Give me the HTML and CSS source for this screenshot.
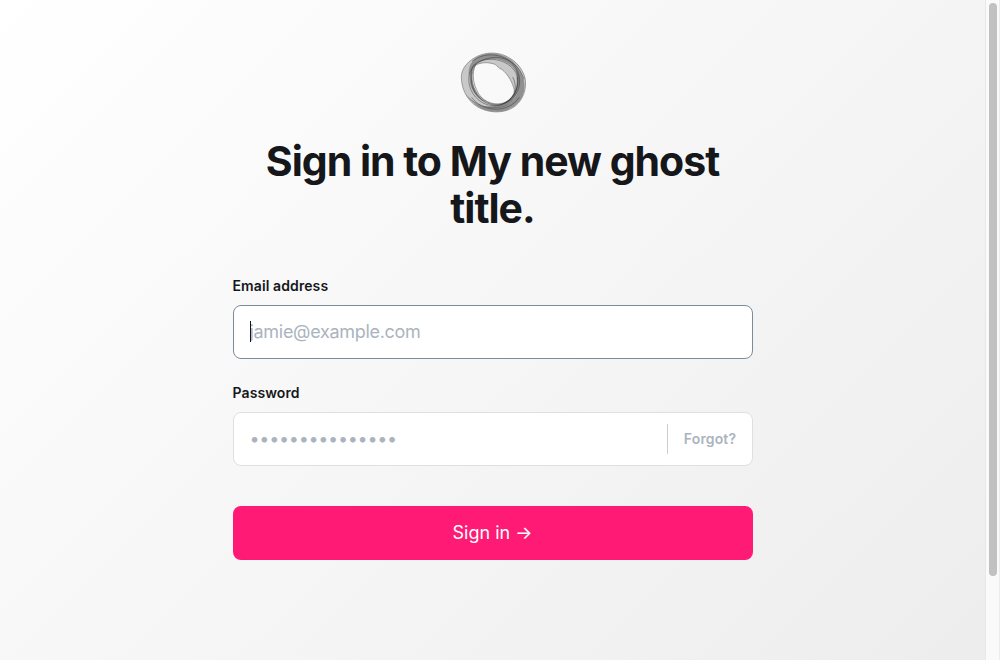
FILE: index.html
```html
<!DOCTYPE html>
<html lang="en">
<head>
<meta charset="utf-8">
<title>Sign in</title>
<link rel="stylesheet" href="styles.css">
</head>
<body>
<div class="page">
  <main class="flow">
    <form class="signin">
      <header class="header">
        <svg class="logo" viewBox="0 0 270 240" aria-hidden="true">
          <path class="band-light" fill-rule="evenodd" d="M34 104C35 77 56 55 84 42C108 31 140 30 165 41C196 54 218 80 225 108C231 139 220 172 196 192C170 212 130 215 96 201C60 187 34 150 34 104ZM76 70C61 91 63 130 84 158C106 184 135 194 163 184C188 170 197 153 191 137C183 111 171 96 157 83C145 80 143 71 135 67C115 60 93 60 76 70Z"/>
          <path class="band-mid" fill-rule="evenodd" d="M69 56C99 26 156 28 190 60C227 99 236 147 203 183C174 211 132 216 92 199C74 188 58 173 49 157C75 190 131 211 178 185C210 158 216 116 195 84C169 46 116 43 82 63C66 73 59 90 57 105C54 86 57 70 69 56Z"/>
          <path class="band-dark" d="M197 82C217 111 209 153 183 181C161 201 128 204 97 191C127 197 160 190 180 169C200 149 207 119 197 82ZM73 65C60 88 63 127 78 149C88 166 101 178 114 185C87 174 66 151 61 126C56 99 61 78 73 65Z"/>
          <g class="strands">
            <path d="M66 58C98 32 146 33 179 57C210 82 216 120 202 149C186 181 148 198 111 188C74 175 52 139 57 102C62 69 98 46 139 46C181 48 211 76 222 112"/>
            <path d="M73 68C111 38 174 52 197 91C216 132 192 176 149 189C111 193 75 167 66 130C61 104 64 82 73 68Z"/>
            <path d="M78 65C62 95 70 137 93 165C116 188 152 193 178 174C198 157 205 132 201 105"/>
            <path d="M65 166C82 188 103 199 128 201C161 205 190 191 208 166"/>
            <path d="M188 105C197 121 197 138 194 152"/>
          </g>
        </svg>
        <h1 class="title">Sign in to My new ghost title.</h1>
      </header>
      <div class="group email">
        <label for="email">Email address</label>
        <div class="field focused"><span class="caret"></span><input id="email" type="text" placeholder="jamie@example.com"></div>
      </div>
      <div class="group password">
        <label for="password">Password</label>
        <div class="field">
          <input id="password" type="password" placeholder="•••••••••••••••">
          <button class="forgot" type="button">Forgot?</button>
        </div>
      </div>
      <button class="submit" type="button">Sign in →</button>
    </form>
  </main>
  <div class="scrollbar"><div class="thumb"></div></div>
</div>
</body>
</html>
```
FILE: styles.css
```css
* { box-sizing: border-box; }
body { margin: 0; font-family: Inter, sans-serif; color: #15171a; overflow: hidden; }
.page { display: flex; height: 660px; }
.flow { flex: 1; display: flex; justify-content: center; align-items: flex-start; background: linear-gradient(135deg, #fff 0%, #ededed 100%); }
.signin { width: 520px; padding-top: 42px; display: flex; flex-direction: column; }
.header { display: flex; flex-direction: column; align-items: center; height: 235px; }
.logo { width: 90px; height: 80px; margin-left: 5px; }
.band-light { fill: #c8c8c8; stroke: #777; stroke-width: 2; }
.band-mid { fill: #777; fill-opacity: .7; }
.band-dark { fill: #444; fill-opacity: .5; }
.strands { fill: none; stroke: #333; stroke-width: 2; stroke-opacity: .7; }
.title { margin: 16px 0 0; font-size: 41px; line-height: 47px; font-weight: 700; letter-spacing: -1px; text-align: center; }
.group { display: flex; flex-direction: column; height: 107px; }
.group label { font-size: 14px; line-height: 18px; font-weight: 600; letter-spacing: 0.1px; margin-bottom: 10px; }
.field { position: relative; display: flex; align-items: center; height: 54px; border: 1px solid #dddfe1; border-radius: 8px; background: #fff; }
.focused { border-color: #7c8b9a; }
.caret { position: absolute; left: 16px; top: 15px; width: 1px; height: 21px; background: #15171a; }
input { flex: 1; min-width: 0; height: 52px; border: 0; outline: 0; padding: 0 16px 2px; background: transparent; font: 400 18px Inter, sans-serif; letter-spacing: -0.3px; }
input::placeholder { color: #abb4be; opacity: 1; }
.forgot { width: 85px; height: 30px; padding: 0 0 2px 1px; border: 0; border-left: 1px solid #c8ced3; background: none; color: #abb4be; font: 600 14px Inter, sans-serif; letter-spacing: 0.15px; }
.submit { height: 54px; margin-top: 15px; padding: 0 0 2px; border: 0; border-radius: 8px; background: #ff1a75; color: #fff; font: 400 18px Inter, sans-serif; }
.scrollbar { width: 15px; padding: 3px 0 0 3px; border-left: 1px solid #e8e8e8; border-right: 1px solid #ececec; background: #fafafa; }
.thumb { width: 8px; height: 573px; border-radius: 4px; background: #c1c1c1; }
```
